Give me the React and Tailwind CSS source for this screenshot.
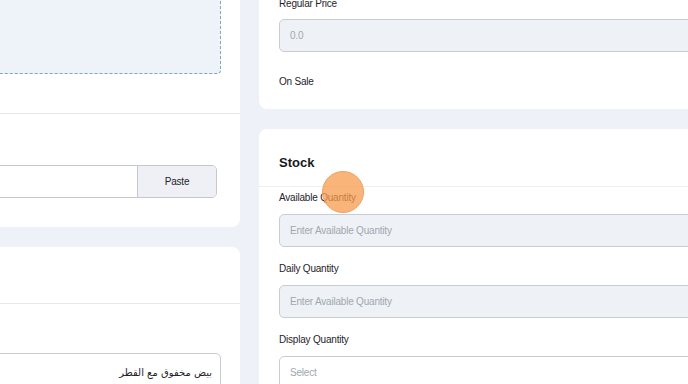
const LABEL = "text-[10px] leading-[14px] text-[#1f2328] tracking-[-0.2px]"
const INPUT = "h-[33px] rounded-[5px] border border-[#c9cdd3] flex items-center px-[10px] text-[10px] tracking-[-0.2px]"

function Field({ label, placeholder, filled = true, first }) {
  return (
    <div className={first ? "" : "mt-[15px]"}>
      <div className={LABEL}>{label}</div>
      <div className={`${INPUT} mt-[9px] ${filled ? "bg-[#eef2f6]" : "bg-white"} text-[#a2a7ae]`}>
        {placeholder}
      </div>
    </div>
  )
}

export default function App() {
  return (
    <div className="relative w-[688px] h-[384px] overflow-hidden bg-[#eef1f8] font-['Liberation_Sans',Arial,sans-serif]">
      <div className="flex gap-[19px] -mt-[23px]">
        {/* left column */}
        <div className="-ml-[100px] w-[340px] shrink-0 flex flex-col gap-[20px]">
          <div className="bg-white rounded-[8px]">
            <div className="pt-[20px] pr-[19px] pb-[39px]">
              <div className="h-[77px] bg-[#eef2f9] border border-dashed border-[#7eaab8] rounded-[4px]" />
            </div>
            <div className="border-t border-[#e6e8ec] pt-[51px] pb-[29px] pr-[23px]">
              <div className="flex h-[33px] rounded-[5px] border border-[#c4c8ce] overflow-hidden">
                <div className="flex-1 bg-white" />
                <div className="w-[79px] bg-[#eef0f6] border-l border-[#c4c8ce] flex items-center justify-center text-[10px] text-[#1f2328] tracking-[-0.2px]">
                  Paste
                </div>
              </div>
            </div>
          </div>
          <div className="bg-white rounded-[8px]">
            <div className="h-[57px] border-b border-[#e6e8ec]" />
            <div className="pt-[49px] pr-[19px]">
              <div dir="rtl" className={`${INPUT} bg-white text-[#1f2328] font-['DejaVu_Sans',sans-serif] text-[10px] pr-[8px] h-[40px] items-start pt-[11px]`}>
                بيض مخفوق مع القطر
              </div>
            </div>
          </div>
        </div>

        {/* right column */}
        <div className="w-[500px] shrink-0 flex flex-col gap-[20px]">
          <div className="bg-white rounded-[8px] pl-[20px] pt-[20px] pb-[20px]">
            <div className={LABEL}>Regular Price</div>
            <div className={`${INPUT} mt-[8px] bg-[#eef2f6] text-[#a2a7ae]`}>0.0</div>
            <div className={`${LABEL} mt-[23px]`}>On Sale</div>
          </div>
          <div className="bg-white rounded-[8px]">
            <div className="pl-[20px] pt-[26px] pb-[15px] border-b border-[#eceef1]">
              <div className="text-[13px] leading-[16px] font-bold text-[#16181c]">Stock</div>
            </div>
            <div className="pl-[20px] pt-[4px] pb-[20px]">
              <Field first label="Available Quantity" placeholder="Enter Available Quantity" />
              <Field label="Daily Quantity" placeholder="Enter Available Quantity" />
              <Field label="Display Quantity" placeholder="Select" filled={false} />
            </div>
          </div>
        </div>
      </div>

      {/* click indicator */}
      <div className="absolute left-[322px] top-[171px] w-[42px] h-[42px] rounded-full bg-[#f79b4d]/75 border border-[#f0a262]" />
    </div>
  )
}
